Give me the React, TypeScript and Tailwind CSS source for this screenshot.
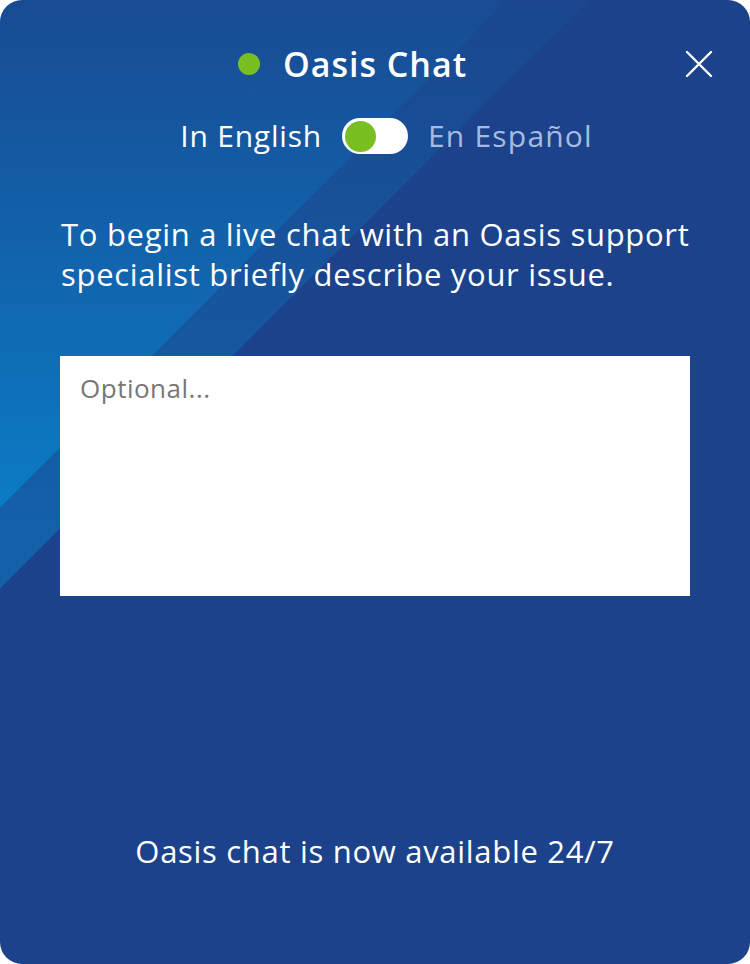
import React, { useState } from 'react';

const CloseIcon: React.FC = () => (
  <svg width="28" height="28" viewBox="0 0 28 28" fill="none" stroke="currentColor" strokeWidth="2.4" strokeLinecap="round">
    <path d="M2 2L26 26M26 2L2 26" />
  </svg>
);

export default function App() {
  const [spanish, setSpanish] = useState(false);
  const [issue, setIssue] = useState('');

  return (
    <div className="w-[750px] h-[964px] bg-white font-['Open_Sans',sans-serif]">
      <div className="relative flex flex-col h-full rounded-[22px] overflow-hidden text-white bg-[#1b428a] bg-[linear-gradient(to_bottom,rgba(27,66,138,0.85)_0px,rgba(27,66,138,0)_520px),linear-gradient(135deg,#0a7dc6_0px,#0a7dc6_359px,#1460a9_359px,#1460a9_416px,#1b428a_416px)]">
        {/* header */}
        <div className="flex items-center justify-center pt-[41px] h-[86px]">
          <h1 className="relative text-[34px] font-semibold tracking-[1px] leading-none">
            <span className="absolute left-[-45px] top-1/2 -translate-y-1/2 w-[22px] h-[22px] rounded-full bg-[#7abf21]" />
            Oasis Chat
          </h1>
        </div>
        <button className="absolute top-[50px] right-[37px] text-white" aria-label="Close">
          <CloseIcon />
        </button>

        {/* language switch */}
        <div className="grid grid-cols-[1fr_auto_1fr] items-center gap-[20px] mt-[32px]">
          <span className="justify-self-end text-[30px] leading-none tracking-[0.8px]">In English</span>
          <button
            onClick={() => setSpanish(!spanish)}
            className={`flex items-center w-[66px] h-[36px] rounded-full bg-white px-[3px] ${spanish ? 'justify-end' : 'justify-start'}`}
          >
            <span className="w-[31px] h-[31px] rounded-full bg-[#7abf21]" />
          </button>
          <span className="justify-self-start text-[30px] leading-none tracking-[1.2px] text-[#a7bbe0]">En Español</span>
        </div>

        <p className="ml-[61px] mr-[20px] mt-[60px] text-[31px] leading-[40px] tracking-[0.7px]">
          To begin a live chat with an Oasis support specialist briefly describe your issue.
        </p>

        <textarea
          value={issue}
          onChange={(e) => setIssue(e.target.value)}
          placeholder="Optional..."
          className="mx-[60px] mt-[62px] h-[240px] bg-white text-[#333] placeholder:text-[#777] text-[26px] tracking-[0.5px] px-[20px] py-[13px] resize-none outline-none"
        />

        <p className="mt-auto mb-[97px] text-center text-[31px] leading-none tracking-[0.7px]">Oasis chat is now available 24/7</p>
      </div>
    </div>
  );
}
